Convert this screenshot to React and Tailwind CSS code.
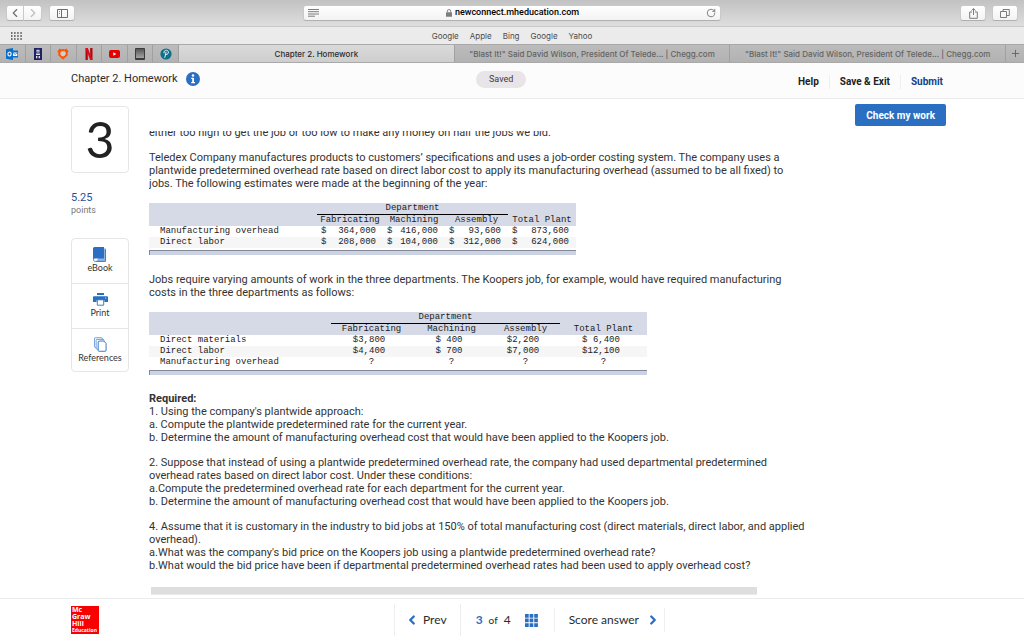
import { ChevronLeft, ChevronRight, Plus, RotateCw } from 'lucide-react';

const bookmarks = ['Google', 'Apple', 'Bing', 'Google', 'Yahoo'];

const tabs = [
    { id: 1, title: 'Chapter 2. Homework', active: true },
    { id: 2, title: '"Blast It!" Said David Wilson, President Of Telede... | Chegg.com' },
    { id: 3, title: '"Blast It!" Said David Wilson, President Of Telede... | Chegg.com' },
];

const estimates = [
    { label: 'Manufacturing overhead', values: ['364,000', '416,000', '93,600', '873,600'] },
    { label: 'Direct labor', values: ['208,000', '104,000', '312,000', '624,000'] },
];

const koopersCosts = [
    { label: 'Direct materials', values: ['$3,800', '$ 400', '$2,200', '$ 6,400'] },
    { label: 'Direct labor', values: ['$4,400', '$ 700', '$7,000', '$12,100'] },
    { label: 'Manufacturing overhead', values: ['?', '?', '?', '?'] },
];

const chromeButton =
    'flex h-4 items-center justify-center border border-[#c9c9c9] border-b-[#b0b0b0] bg-linear-to-b from-white to-[#f3f3f3] text-[#6e6e6e]';

/* ---------- Pinned tab icons ---------- */

const OutlookIcon = () => (
    <svg width="12" height="12" viewBox="0 0 12 12">
        <path d="M6 2.5h6v7H6z" fill="#0a6fc9" />
        <path d="M7 4.500h4.300v3.500H7z" fill="#fff" />
        <path d="M7 4.500l2.200 2 2.100-2" stroke="#0a6fc9" strokeWidth="0.8" fill="none" />
        <path d="M0 1.2L7 0v12L0 10.8z" fill="#0a6fc9" />
        <ellipse cx="3.5" cy="6" rx="1.6" ry="2" fill="none" stroke="#fff" strokeWidth="1.1" />
    </svg>
);

const TowerIcon = () => (
    <svg width="8" height="12" viewBox="0 0 8 12">
        <path d="M0 0h8v12H0z" fill="#1f2260" />
        <path d="M2.500 1.800h3v2.700h-3zM2 5.500h4v1.600H2zM2 8h1.400v2.300H2zM4.600 8H6v2.300H4.600z" fill="#dfe0ee" />
        <path d="M3.500 2.800h1v1h-1z" fill="#1f2260" />
    </svg>
);

const CheggIcon = () => (
    <svg width="12" height="12" viewBox="0 0 12 12">
        <path
            d="M2.600 0.600L4.300 1.600 6 1.100l1.700 0.500 1.700-1L11.600 3.600l-1 1.200 0.200 2.400L6 11.800 1.200 7.200l0.200-2.400-1-1.200z"
            fill="#fb5607"
        />
        <path d="M4.300 3.300h3.400l1.300 2.200-1.300 2.200L6 8.500l-1.700-0.800L3 5.500z" fill="#d0d0d0" />
    </svg>
);

const NetflixIcon = () => (
    <svg width="8" height="12" viewBox="0 0 8 12">
        <path d="M0.5 0h2.3v12H0.5zM5.2 0h2.3v12H5.2z" fill="#b1060f" />
        <path d="M0.5 0h2.3l4.7 12H5.2z" fill="#e50914" />
    </svg>
);

const YoutubeIcon = () => (
    <svg width="11" height="8" viewBox="0 0 11 8">
        <rect width="11" height="8" rx="2" fill="#e60000" />
        <path d="M4.3 2.3v3.4L7.3 4z" fill="#fff" />
    </svg>
);

const DeviceIcon = () => (
    <svg width="10" height="12" viewBox="0 0 10 12">
        <defs>
            <linearGradient id="device" x1="0" y1="0" x2="0" y2="1">
                <stop offset="0" stopColor="#555" />
                <stop offset="1" stopColor="#a5a5a5" />
            </linearGradient>
        </defs>
        <rect width="10" height="12" rx="1" fill="#3c3c3c" />
        <rect x="1" y="1" width="8" height="9" fill="url(#device)" />
    </svg>
);

const PearsonIcon = () => (
    <svg width="12" height="12" viewBox="0 0 12 12">
        <circle cx="6" cy="6" r="5.6" fill="#0d6f88" />
        <path
            d="M4 5C3.6 3 5 2.2 6.3 2.3 8 2.4 8.7 3.6 8.3 4.9 8 6.1 6.8 6.8 5.6 6.6M6 4.2c-.2 1.8-.6 3.4-1.2 5.2"
            fill="none"
            stroke="#fff"
            strokeWidth="0.9"
            strokeLinecap="round"
        />
    </svg>
);

const pinned = [
    { name: 'Outlook', Icon: OutlookIcon },
    { name: 'Campus', Icon: TowerIcon },
    { name: 'Chegg', Icon: CheggIcon },
    { name: 'Netflix', Icon: NetflixIcon },
    { name: 'YouTube', Icon: YoutubeIcon },
    { name: 'Device', Icon: DeviceIcon },
    { name: 'Pearson', Icon: PearsonIcon },
];

/* ---------- Side tool icons ---------- */

const BookIcon = () => (
    <svg width="14" height="15" viewBox="0 0 14 15">
        <path d="M11 1.5h2v12l-1.5 1.5H3" fill="#8fb5e3" />
        <path d="M1.5 0H11v11.5H1.5A1.5 1.5 0 0 0 0 13V1.5A1.5 1.5 0 0 1 1.5 0z" fill="#2a6fc1" />
        <path d="M0.5 12.2c0 1.6.6 2.2 1.8 2.2h10.2V2.5" fill="none" stroke="#2a6fc1" strokeWidth="0.8" />
    </svg>
);

const PrinterIcon = () => (
    <svg width="15" height="13" viewBox="0 0 15 13">
        <path d="M4 0h7v2H4z" fill="#2a6fc1" />
        <path d="M1 3.2h13a1 1 0 0 1 1 1V9h-3.6V7H3.6v2H0V4.200a1 1 0 0 1 1-1z" fill="#2a6fc1" />
        <path d="M4.3 6.8h6.4v5.4H4.3z" fill="#fff" stroke="#2a6fc1" strokeWidth="0.9" />
        <circle cx="12.7" cy="5" r="0.6" fill="#fff" />
    </svg>
);

const PagesIcon = () => (
    <svg width="13" height="15" viewBox="0 0 14 16" fill="#fff" stroke="#2a6fc1">
        <rect x="0.5" y="0.7" width="8.500" height="10.500" rx="1" strokeWidth="0.7" />
        <rect x="2.300" y="2.500" width="8.500" height="10.500" rx="1" strokeWidth="0.7" />
        <path d="M4.500 5.300a1 1 0 0 1 1-1h5l2.500 2.500v7.500a1 1 0 0 1-1 1H5.500a1 1 0 0 1-1-1z" />
    </svg>
);

const sideTools = [
    { label: 'eBook', Icon: BookIcon },
    { label: 'Print', Icon: PrinterIcon },
    { label: 'References', Icon: PagesIcon },
];

/* ---------- Browser ---------- */

const BrowserChrome = () => (
    <div className="font-['Inter',sans-serif]">
        <div className="grid h-[27px] grid-cols-[1fr_minmax(0,418px)_1fr] items-center border-b border-[#c8c8c8] bg-linear-to-b from-[#c2c2c2] to-[#dedede] px-1.5">
            <div className="flex items-center gap-[7px]">
                <div className="flex">
                    <button aria-label="Back" className={`${chromeButton} w-[18px] rounded-l-[3px]`}>
                        <ChevronLeft size={14} className="shrink-0" />
                    </button>
                    <button aria-label="Forward" className={`${chromeButton} -ml-px w-[19px] rounded-r-[3px]`}>
                        <ChevronRight size={14} color="#bdbdbd" className="shrink-0" />
                    </button>
                </div>
                <button aria-label="Show sidebar" className={`${chromeButton} w-[26px] rounded-[3px]`}>
                    <svg width="11" height="9" viewBox="0 0 11 9" fill="none" stroke="currentColor">
                        <path d="M0.5 0.5h10v8h-10zM4.500 0.500v8" />
                        <path d="M2 2.500h1M2 4.500h1" strokeWidth="0.8" />
                    </svg>
                </button>
            </div>

            <div className="flex h-4 items-center justify-between rounded-[3px] border border-[#c9c9c9] border-b-[#b0b0b0] bg-linear-to-b from-white to-[#f3f3f3] px-1 text-[#6e6e6e]">
                <svg width="11" height="8" viewBox="0 0 11 8" stroke="currentColor">
                    <path d="M0 0.500h11M0 2.700h11M0 5h11M0 7.200h7" strokeWidth="0.9" />
                </svg>
                <div className="flex items-center gap-[3px]">
                    <svg width="6" height="8" viewBox="0 0 6 8">
                        <rect y="3.300" width="6" height="4.500" rx="0.500" fill="#7d7d7d" />
                        <path d="M1.300 3.500V2.200a1.700 1.700 0 0 1 3.400 0v1.300" fill="none" stroke="#7d7d7d" strokeWidth="0.9" />
                    </svg>
                    <input
                        aria-label="Address"
                        defaultValue="newconnect.mheducation.com"
                        className="field-sizing-content font-['Roboto',sans-serif] text-[9px] font-medium text-black outline-none"
                    />
                </div>
                <button aria-label="Reload">
                    <RotateCw size={10} />
                </button>
            </div>

            <div className="flex justify-end gap-1.5">
                <button aria-label="Share" className={`${chromeButton} w-[26px] rounded-[3px]`}>
                    <svg width="9" height="11" viewBox="0 0 9 11" fill="none" stroke="currentColor" strokeWidth="0.9">
                        <path d="M3 4H0.700v6.300h7.600V4H6M4.500 7V0.700M2.500 2.600l2-2 2 2" />
                    </svg>
                </button>
                <button aria-label="Show all tabs" className={`${chromeButton} w-[26px] rounded-[3px]`}>
                    <svg width="10" height="9" viewBox="0 0 10 9" fill="none" stroke="currentColor" strokeWidth="0.9">
                        <path d="M0.500 2.500h6v6h-6zM3 2.500v-2h6.300v6H6.500" />
                    </svg>
                </button>
            </div>
        </div>

        <div className="grid h-[17px] grid-cols-[1fr_auto_1fr] items-center bg-[#ebebeb] px-[11px]">
            <button aria-label="Favorites" className="w-fit">
                <svg width="11" height="8" viewBox="0 0 11 8" stroke="#444" strokeWidth="1.300" strokeDasharray="1.500 1.600">
                    <path d="M0 1h11M0 4h11M0 7h11" />
                </svg>
            </button>
            <nav className="flex gap-[11px] text-[8px] text-[#4a4a4a]">
                {bookmarks.map((name, i) => (
                    <a key={i} href="#">{name}</a>
                ))}
            </nav>
        </div>

        <div className="flex h-[19px] border-y border-[#a9a9a9] bg-linear-to-b from-[#bcbcbc] to-[#b2b2b2] text-[8px] font-medium text-[#636363]">
            <div className="grid w-[179px] shrink-0 grid-cols-7">
                {pinned.map(({ name, Icon }) => (
                    <button
                        key={name}
                        aria-label={name}
                        className="flex items-center justify-center border-r border-[#a0a0a0]"
                    >
                        <Icon />
                    </button>
                ))}
            </div>
            {tabs.map((tab) => (
                <button
                    key={tab.id}
                    className={
                        tab.active
                            ? 'min-w-0 flex-1 truncate border-r border-[#a0a0a0] bg-linear-to-b from-[#dadada] to-[#cecece] text-[#2d2d2d]'
                            : 'min-w-0 flex-1 truncate border-r border-[#a0a0a0]'
                    }
                >
                    {tab.title}
                </button>
            ))}
            <button aria-label="New tab" className="flex w-[18px] items-center justify-center">
                <Plus size={11} strokeWidth={2} />
            </button>
        </div>
    </div>
);

/* ---------- Assignment ---------- */

const AssignmentHeader = () => (
    <header className="flex h-9 items-center border-b border-[#ececec] bg-[#fcfcfc] pr-[81px] pb-[3px] pl-[71px]">
        <div className="flex w-[405px] items-center gap-2 text-[#2b2b2b]">
            <h1 className="text-[11px]">Chapter 2. Homework</h1>
            <button aria-label="Assignment information">
                <svg width="14" height="14" viewBox="0 0 14 14">
                    <circle cx="7" cy="7" r="7" fill="#2a6fc1" />
                    <circle cx="7" cy="3.500" r="1.200" fill="#fff" />
                    <path d="M5.200 5.800H8v4.200h1v1.200H5.200V10h1V7h-1z" fill="#fff" />
                </svg>
            </button>
        </div>
        <span className="rounded-full bg-[#e8e4e8] px-[13px] text-[9px] leading-[17px] text-[#3c3c3c]">Saved</span>
        <nav className="mt-[5px] ml-auto flex text-[10px] leading-[14px] font-bold text-[#222]">
            <a href="#" className="pr-2.5">Help</a>
            <a href="#" className="border-x border-[#eee] px-2.5">Save &amp; Exit</a>
            <a href="#" className="pl-2.5 text-[#0f4288]">Submit</a>
        </nav>
    </header>
);

const SideColumn = () => (
    <aside className="w-[58px] shrink-0 pt-[7px]">
        <div className="flex h-[67px] items-center justify-center rounded border border-[#e6e6e6] font-['Lato',sans-serif] text-[50px] text-[#222]">
            3
        </div>
        <div className="mt-[18px] text-[11px] leading-[13px] text-[#1c5296]">5.25</div>
        <div className="text-[9px] leading-[12px] text-[#777]">points</div>
        <div className="mt-[22px] divide-y divide-[#e6e6e6] rounded border border-[#e6e6e6]">
            {sideTools.map(({ label, Icon }) => (
                <button
                    key={label}
                    className="flex h-[45px] w-full flex-col items-center pt-2 font-['Lato',sans-serif] text-[9px] leading-[12px] text-[#333] last:h-[42px]"
                >
                    <span className="flex h-[15px] items-center">
                        <Icon />
                    </span>
                    {label}
                </button>
            ))}
        </div>
    </aside>
);

const TableHead = () => (
    <thead className="bg-[#d6dae7]">
        <tr>
            <th rowSpan={2} />
            <th colSpan={3} className="border-b border-black font-normal">Department</th>
            <th />
        </tr>
        <tr>
            <th className="font-normal">Fabricating</th>
            <th className="font-normal">Machining</th>
            <th className="font-normal">Assembly</th>
            <th className="font-normal whitespace-nowrap">Total Plant</th>
        </tr>
    </thead>
);

const TableFooterBar = () => (
    <div className="mt-0.5 h-[5px] border-t border-l border-[#83899a] bg-[#cbd3e3]" />
);

const EstimatesTable = () => (
    <div className="w-[427px]">
        <table className="w-full table-fixed font-['Liberation_Mono',monospace] text-[9px] leading-[11px] text-[#222]">
            <colgroup>
                <col className="w-[168px]" />
                <col className="w-[66px]" />
                <col className="w-[62px]" />
                <col className="w-[63px]" />
                <col className="w-[68px]" />
            </colgroup>
            <TableHead />
            <tbody>
                {estimates.map((row) => (
                    <tr key={row.label} className="even:bg-[#f6f6f6]">
                        <td className="pl-[11px]">{row.label}</td>
                        {row.values.map((value, i) => (
                            <td key={i} className="pr-[7px] pl-1">
                                <div className="flex justify-between">
                                    <span>$</span>
                                    <span>{value}</span>
                                </div>
                            </td>
                        ))}
                    </tr>
                ))}
            </tbody>
        </table>
        <TableFooterBar />
    </div>
);

const KoopersTable = () => (
    <div className="w-[498px]">
        <table className="w-full table-fixed font-['Liberation_Mono',monospace] text-[9px] leading-[11px] text-[#222]">
            <colgroup>
                <col className="w-[182px]" />
                <col className="w-[81px]" />
                <col className="w-[79px]" />
                <col className="w-[69px]" />
                <col className="w-[87px]" />
            </colgroup>
            <TableHead />
            <tbody>
                {koopersCosts.map((row) => (
                    <tr key={row.label} className="even:bg-[#f6f6f6]">
                        <td className="pl-[11px]">{row.label}</td>
                        {row.values.map((value, i) => (
                            <td key={i} className={value === '?' ? 'text-center' : 'pr-[5px] text-center'}>
                                {value}
                            </td>
                        ))}
                    </tr>
                ))}
            </tbody>
        </table>
        <TableFooterBar />
    </div>
);

const Question = () => (
    <div className="mt-8 min-w-0 flex-1 overflow-hidden">
        <div className="-mt-[5px] text-[11px] leading-[13px] whitespace-nowrap text-[#333]">
            <p>either too high to get the job or too low to make any money on half the jobs we bid.</p>
            <p className="mt-3">
                Teledex Company manufactures products to customers’ specifications and uses a job-order costing system. The company uses a<br />
                plantwide predetermined overhead rate based on direct labor cost to apply its manufacturing overhead (assumed to be all fixed) to<br />
                jobs. The following estimates were made at the beginning of the year:
            </p>
            <div className="mt-[13px]">
                <EstimatesTable />
            </div>
            <p className="mt-[18px]">
                Jobs require varying amounts of work in the three departments. The Koopers job, for example, would have required manufacturing<br />
                costs in the three departments as follows:
            </p>
            <div className="mt-[13px]">
                <KoopersTable />
            </div>
            <p className="mt-[17px]">
                <b>Required:</b><br />
                1. Using the company's plantwide approach:<br />
                a. Compute the plantwide predetermined rate for the current year.<br />
                b. Determine the amount of manufacturing overhead cost that would have been applied to the Koopers job.
            </p>
            <p className="mt-3">
                2. Suppose that instead of using a plantwide predetermined overhead rate, the company had used departmental predetermined<br />
                overhead rates based on direct labor cost. Under these conditions:<br />
                a.Compute the predetermined overhead rate for each department for the current year.<br />
                b. Determine the amount of manufacturing overhead cost that would have been applied to the Koopers job.
            </p>
            <p className="mt-3">
                4. Assume that it is customary in the industry to bid jobs at 150% of total manufacturing cost (direct materials, direct labor, and applied<br />
                overhead).<br />
                a.What was the company's bid price on the Koopers job using a plantwide predetermined overhead rate?<br />
                b.What would the bid price have been if departmental predetermined overhead rates had been used to apply overhead cost?
            </p>
        </div>
        <div className="mt-[15px] ml-0.5 h-2 w-[606px] border-b border-[#eaeaea] bg-[#dedede]" />
    </div>
);

const AssignmentFooter = () => (
    <footer className="flex shrink-0 items-center border-t border-[#ececec] bg-white pt-[5px] pb-1 pl-[71px]">
        <div className="h-7 w-7 bg-[#f80000] pl-px font-['Open_Sans',sans-serif] text-[7px] leading-[7px] font-bold text-white">
            <div>Mc</div>
            <div>Graw</div>
            <div>Hill</div>
            <div className="text-[5px]">Education</div>
        </div>
        <nav className="ml-[295px] flex items-center font-['Lato',sans-serif] text-[12px] text-[#2b2b2b]">
            <button className="flex h-8 items-center gap-1 border-x border-[#eee] pr-[13px] pl-2.5">
                <ChevronLeft size={14} strokeWidth={4} color="#2a6fc1" />
                Prev
            </button>
            <div className="flex h-6 items-center gap-1.5 border-r border-[#eee] pr-4 pl-[15px]">
                <b className="text-[#2a6fc1]">3</b>
                <span className="text-[10px]">of</span>
                <span>4</span>
                <button aria-label="Question list" className="ml-2">
                    <svg width="13" height="13" viewBox="0 0 13 13" fill="#2a6fc1">
                        <path d="M0 0h3.700v3.700H0zM4.600 0h3.700v3.700H4.600zM9.200 0h3.700v3.700H9.200zM0 4.600h3.700v3.700H0zM4.600 4.600h3.700v3.700H4.600zM9.200 4.600h3.700v3.700H9.200zM0 9.200h3.700v3.700H0zM4.600 9.200h3.700v3.700H4.600zM9.200 9.200h3.700v3.700H9.200z" />
                    </svg>
                </button>
            </div>
            <button className="flex h-6 items-center gap-[7px] border-r border-[#eee] pr-1 pl-[14px]">
                Score answer
                <ChevronRight size={14} strokeWidth={4} color="#2a6fc1" />
            </button>
        </nav>
    </footer>
);

const App = () => {
    return (
        <div className="flex h-screen flex-col bg-white font-['Roboto',sans-serif]">
            <BrowserChrome />
            <AssignmentHeader />
            <main className="flex min-h-0 flex-1 items-start overflow-hidden pr-[78px] pl-[71px]">
                <SideColumn />
                <div className="ml-5 flex min-w-0 flex-1 items-start">
                    <Question />
                    <button className="mt-[5px] h-[22px] shrink-0 rounded-xs bg-[#2a6fc1] px-[11px] text-[10px] font-bold whitespace-nowrap text-white">
                        Check my work
                    </button>
                </div>
            </main>
            <AssignmentFooter />
        </div>
    );
};

export default App;
